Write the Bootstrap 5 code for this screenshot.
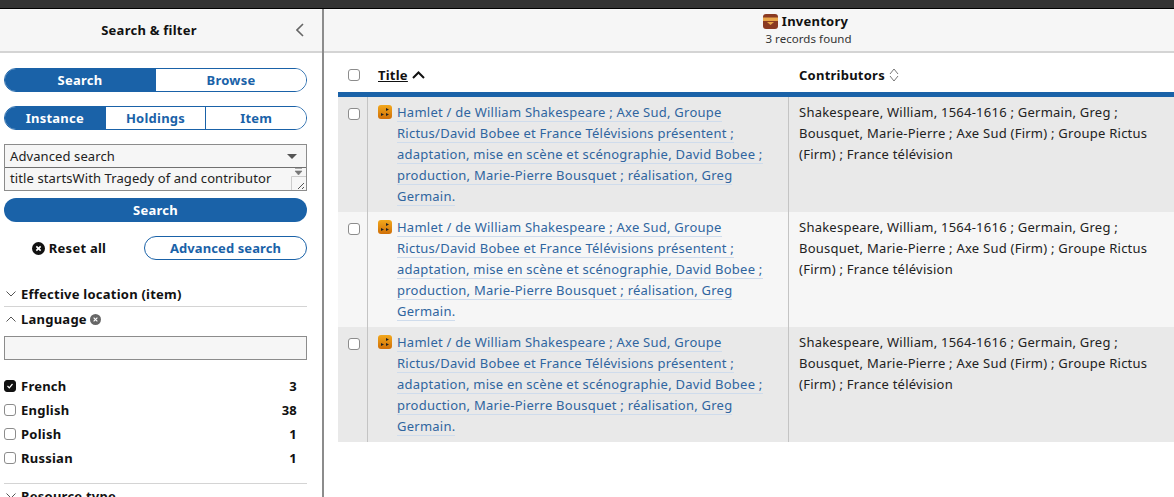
<!DOCTYPE html>
<html lang="en">
<head>
    <meta charset="UTF-8">
    <meta name="viewport" content="width=device-width, initial-scale=1.0">
    <title>Inventory</title>
    <link href="https://cdn.jsdelivr.net/npm/bootstrap@5.3.2/dist/css/bootstrap.min.css" rel="stylesheet">
    <style>
        body {
            height: 100vh;
            overflow: hidden;
            font-family: "Noto Sans", "Open Sans", sans-serif;
            font-size: 13px;
            line-height: 21px;
            letter-spacing: .24px;
            color: #222;
            background: #fff;
        }

        .top-strip {
            height: 9px;
            background: #333;
            border-bottom: 1px solid #000;
        }

        .app-body {
            height: 488px;
        }

        .side-pane {
            width: 324px;
            border-right: 2px solid #8c8c8c;
            overflow: hidden;
        }

        .pane-head {
            height: 44px;
            background: #f6f6f6;
            border-bottom: 2px solid #d4d4d4;
            padding-right: 24px;
        }

        .pane-title {
            font-weight: 700;
            color: #111;
        }

        .pane-back {
            right: 18px;
            top: 14px;
        }

        .side-form {
            padding: 15px 15px 0 4px;
        }

        .seg {
            height: 24px;
            border: 1px solid #1a62a8;
            border-radius: 12px;
            overflow: hidden;
            margin-bottom: 14px;
        }

        .seg-btn {
            flex: 1 1 0;
            line-height: 22px;
            text-align: center;
            font-weight: 700;
            color: #1a62a8;
            background: #fff;
        }

        .seg-btn + .seg-btn {
            border-left: 1px solid #1a62a8;
        }

        .seg-btn.on {
            background: #1a62a8;
            color: #fff;
        }

        .query-box {
            height: 47px;
            border: 1px solid #8c8c8c;
            background: #f6f6f6;
            letter-spacing: .1px;
            margin-bottom: 7px;
        }

        .query-row {
            height: 22px;
            padding-left: 5px;
        }

        .query-row + .query-row {
            height: 23px;
            border-top: 1px solid #707070;
        }

        .caret-down {
            width: 0;
            height: 0;
            margin-right: 9px;
            border-left: 5px solid transparent;
            border-right: 5px solid transparent;
            border-top: 5px solid #555;
        }

        .search-go {
            height: 24px;
            line-height: 24px;
            border-radius: 12px;
            background: #1a62a8;
            color: #fff;
            font-weight: 700;
            text-align: center;
            margin-bottom: 14px;
        }

        .reset-row {
            margin-bottom: 22px;
        }

        .reset-link {
            width: 140px;
            padding-right: 10px;
            font-weight: 700;
            color: #111;
        }

        .adv-btn {
            height: 24px;
            line-height: 22px;
            border: 1px solid #1a62a8;
            border-radius: 12px;
            color: #1a62a8;
            font-weight: 700;
            letter-spacing: .1px;
            text-align: center;
            flex: 1 1 0;
        }

        .facet-head {
            font-weight: 700;
            color: #111;
            height: 24px;
            line-height: 24px;
            gap: 5px;
            padding-left: 2px;
        }

        .facet-rule {
            border-bottom: 1px solid #d4d4d4;
        }

        .facet-head.facet-rule {
            height: 25px;
        }

        .facet-clear {
            margin-left: -2px;
        }

        .facet-input {
            height: 24px;
            border: 1px solid #8c8c8c;
            background: #f6f6f6;
            margin: 5px 0 14px;
        }

        .facet-item {
            height: 24px;
            line-height: 24px;
            font-weight: 700;
            color: #111;
            padding-right: 10px;
            gap: 5px;
        }

        .facet-end {
            margin-top: 13px;
        }

        .tick {
            width: 12px;
            height: 12px;
            border: 1px solid #8c8c8c;
            border-radius: 3px;
            background: #fff;
            flex: none;
        }

        .tick.on {
            background: #111;
            border-color: #111;
        }

        .main-pane {
            min-width: 0;
        }

        .main-head {
            height: 44px;
            background: #f6f6f6;
            border-bottom: 2px solid #d4d4d4;
            text-align: center;
            padding-left: 119px;
        }

        .main-title {
            font-weight: 700;
            line-height: 20px;
            padding-top: 2px;
            padding-right: 6px;
            color: #111;
        }

        .main-sub {
            font-size: 11.5px;
            letter-spacing: .06px;
            line-height: 16px;
            color: #333;
        }

        .result-wrap {
            padding-left: 14px;
        }

        .result-head {
            height: 44px;
            padding-top: 5px;
            border-bottom: 5px solid #1a62a8;
            font-weight: 700;
            color: #111;
        }

        .col-tick {
            width: 29px;
            flex: none;
            padding-left: 10px;
        }

        .col-name {
            width: 421px;
            flex: none;
            padding: 5px 10px;
        }

        .col-who {
            flex: 1 1 0;
            padding: 5px 10px;
        }

        .result-head .col-name,
        .result-head .col-who {
            padding-left: 11px;
        }

        .result-row {
            height: 115px;
        }

        .result-row:nth-child(odd) {
            background: #e9e9e9;
        }

        .result-row:nth-child(even) {
            background: #f6f6f6;
        }

        .result-row .col-tick {
            padding-top: 11px;
        }

        .result-row .col-name,
        .result-row .col-who {
            border-left: 1px solid #c4c4c4;
        }

        .result-row .col-name {
            display: flex;
            gap: 5px;
        }

        .format-icon {
            flex: none;
            margin-top: 3px;
        }

        .rec-link {
            color: #2f659f;
            text-decoration: none;
            border-bottom: 1px solid #cfdcec;
        }

        .title-sorted {
            text-decoration: underline;
        }
    </style>
</head>
<body>
    <div class="top-strip"></div>
    <div class="app-body d-flex">
        <div class="side-pane flex-shrink-0">
            <div class="pane-head position-relative d-flex align-items-center justify-content-center">
                <span class="pane-title">Search &amp; filter</span>
                <svg class="pane-back position-absolute" width="8" height="14" viewBox="0 0 8 14"><path d="M7 1 1 7l6 6" fill="none" stroke="#666" stroke-width="1.6"/></svg>
            </div>
            <div class="side-form">
                <div class="seg d-flex">
                    <div class="seg-btn on">Search</div>
                    <div class="seg-btn">Browse</div>
                </div>
                <div class="seg d-flex">
                    <div class="seg-btn on">Instance</div>
                    <div class="seg-btn">Holdings</div>
                    <div class="seg-btn">Item</div>
                </div>
                <div class="query-box">
                    <div class="query-row d-flex justify-content-between align-items-center">
                        <span>Advanced search</span><span class="caret-down"></span>
                    </div>
                    <div class="query-row d-flex justify-content-between overflow-hidden">
                        <span>title startsWith Tragedy of and contributor</span>
                        <svg width="15" height="22" viewBox="0 0 15 22" class="flex-shrink-0"><path d="M4 .5h7M4 3h7L7.500 7z" fill="#777" stroke="#777" stroke-width=".6"/><path d="M.5 22V8.500H15" fill="none" stroke="#ccc"/><path d="M7 21l6-6M11 21l2-2" stroke="#555"/></svg>
                    </div>
                </div>
                <div class="search-go">Search</div>
                <div class="reset-row d-flex align-items-center">
                    <div class="reset-link d-flex align-items-center justify-content-center gap-1">
                        <svg width="13" height="13" viewBox="0 0 12 12"><circle cx="6" cy="6" r="6" fill="#111"/><path d="M4 4l4 4M8 4l-4 4" stroke="#fff" stroke-width="1.500"/></svg>
                        <span>Reset all</span>
                    </div>
                    <div class="adv-btn">Advanced search</div>
                </div>
                <div class="facet-head facet-rule d-flex align-items-center">
                    <svg width="10" height="6" viewBox="0 0 10 6"><path d="M.5.5 5 5 9.500.5" fill="none" stroke="#555"/></svg>
                    <span>Effective location (item)</span>
                </div>
                <div class="facet-head d-flex align-items-center">
                    <svg width="10" height="6" viewBox="0 0 10 6"><path d="M.5 5.500 5 1l4.500 4.500" fill="none" stroke="#555"/></svg>
                    <span>Language</span>
                    <svg class="facet-clear" width="11" height="11" viewBox="0 0 10 10"><circle cx="5" cy="5" r="5" fill="#666"/><path d="M3.300 3.300l3.400 3.400M6.700 3.300 3.300 6.700" stroke="#fff"/></svg>
                </div>
                <div class="facet-input"></div>
                <div class="facet-item d-flex align-items-center">
                    <span class="tick on d-flex align-items-center justify-content-center">
                        <svg width="8" height="8" viewBox="0 0 8 8"><path d="M1.500 4 3.300 5.800 6.500 2" fill="none" stroke="#fff" stroke-width="1.200"/></svg>
                    </span>
                    <span class="flex-grow-1">French</span><span>3</span>
                </div>
                <div class="facet-item d-flex align-items-center">
                    <span class="tick"></span><span class="flex-grow-1">English</span><span>38</span>
                </div>
                <div class="facet-item d-flex align-items-center">
                    <span class="tick"></span><span class="flex-grow-1">Polish</span><span>1</span>
                </div>
                <div class="facet-item d-flex align-items-center">
                    <span class="tick"></span><span class="flex-grow-1">Russian</span><span>1</span>
                </div>
                <div class="facet-rule facet-end"></div>
                <div class="facet-head d-flex align-items-center">
                    <svg width="10" height="6" viewBox="0 0 10 6"><path d="M.5.5 5 5 9.500.5" fill="none" stroke="#555"/></svg>
                    <span>Resource type</span>
                </div>
            </div>
        </div>

        <div class="main-pane flex-grow-1">
            <div class="main-head">
                <div class="main-title d-flex align-items-center justify-content-center gap-1">
                    <svg width="15" height="15" viewBox="0 0 15 15"><rect width="15" height="15" rx="3" fill="#8a3a22"/><rect y="3.500" width="15" height="3.500" fill="#e8a64a"/><path d="M4 8h7L7.500 11z" fill="#e8a64a"/></svg>
                    <span>Inventory</span>
                </div>
                <div class="main-sub">3 records found</div>
            </div>
            <div class="result-wrap">
                <div class="result-head d-flex align-items-center">
                    <div class="col-tick"><span class="tick d-block"></span></div>
                    <div class="col-name d-flex align-items-center gap-1">
                        <span class="title-sorted">Title</span>
                        <svg width="13" height="8" viewBox="0 0 13 8"><path d="M1 7l5.500-5.500L12 7" fill="none" stroke="#111" stroke-width="2"/></svg>
                    </div>
                    <div class="col-who d-flex align-items-center gap-1">
                        <span>Contributors</span>
                        <svg width="10" height="14" viewBox="0 0 10 14"><path d="M1 6l4-5 4 5M1 8l4 5 4-5" fill="none" stroke="#777"/></svg>
                    </div>
                </div>
                <div class="result-rows">
                    <div class="result-row d-flex">
                        <div class="col-tick"><span class="tick d-block"></span></div>
                        <div class="col-name">
                            <svg class="format-icon" width="14" height="14" viewBox="0 0 14 14"><defs><linearGradient id="fmtFill" x1="0" y1="0" x2="0" y2="1"><stop offset="0" stop-color="#f2a81c"/><stop offset="1" stop-color="#d06f08"/></linearGradient></defs><rect width="14" height="14" rx="3" fill="url(#fmtFill)"/><path d="M8 3l3 1.500L8 6zM3 8l3 1.500L3 11zM8 8l3 1.500L8 11z" fill="#222"/></svg>
                            <div><a class="rec-link" href="#">Hamlet / de William Shakespeare ; Axe Sud, Groupe<br>Rictus/David Bobee et France Télévisions présentent ;<br>adaptation, mise en scène et scénographie, David Bobee ;<br>production, Marie-Pierre Bousquet ; réalisation, Greg<br>Germain.</a></div>
                        </div>
                        <div class="col-who">Shakespeare, William, 1564-1616 ; Germain, Greg ;<br>Bousquet, Marie-Pierre ; Axe Sud (Firm) ; Groupe Rictus<br>(Firm) ; France télévision</div>
                    </div>
                    <div class="result-row d-flex">
                        <div class="col-tick"><span class="tick d-block"></span></div>
                        <div class="col-name">
                            <svg class="format-icon" width="14" height="14" viewBox="0 0 14 14"><rect width="14" height="14" rx="3" fill="url(#fmtFill)"/><path d="M8 3l3 1.500L8 6zM3 8l3 1.500L3 11zM8 8l3 1.500L8 11z" fill="#222"/></svg>
                            <div><a class="rec-link" href="#">Hamlet / de William Shakespeare ; Axe Sud, Groupe<br>Rictus/David Bobee et France Télévisions présentent ;<br>adaptation, mise en scène et scénographie, David Bobee ;<br>production, Marie-Pierre Bousquet ; réalisation, Greg<br>Germain.</a></div>
                        </div>
                        <div class="col-who">Shakespeare, William, 1564-1616 ; Germain, Greg ;<br>Bousquet, Marie-Pierre ; Axe Sud (Firm) ; Groupe Rictus<br>(Firm) ; France télévision</div>
                    </div>
                    <div class="result-row d-flex">
                        <div class="col-tick"><span class="tick d-block"></span></div>
                        <div class="col-name">
                            <svg class="format-icon" width="14" height="14" viewBox="0 0 14 14"><rect width="14" height="14" rx="3" fill="url(#fmtFill)"/><path d="M8 3l3 1.500L8 6zM3 8l3 1.500L3 11zM8 8l3 1.500L8 11z" fill="#222"/></svg>
                            <div><a class="rec-link" href="#">Hamlet / de William Shakespeare ; Axe Sud, Groupe<br>Rictus/David Bobee et France Télévisions présentent ;<br>adaptation, mise en scène et scénographie, David Bobee ;<br>production, Marie-Pierre Bousquet ; réalisation, Greg<br>Germain.</a></div>
                        </div>
                        <div class="col-who">Shakespeare, William, 1564-1616 ; Germain, Greg ;<br>Bousquet, Marie-Pierre ; Axe Sud (Firm) ; Groupe Rictus<br>(Firm) ; France télévision</div>
                    </div>
                </div>
            </div>
        </div>
    </div>
    <script src="https://cdn.jsdelivr.net/npm/bootstrap@5.3.2/dist/js/bootstrap.bundle.min.js"></script>
</body>
</html>
